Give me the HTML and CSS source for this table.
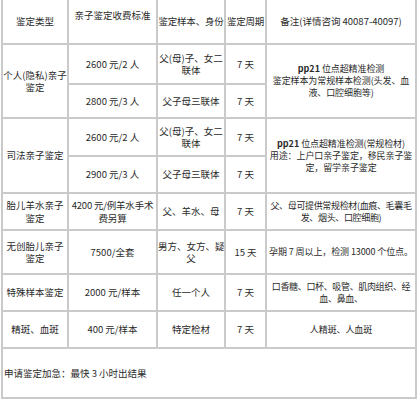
FILE: index.html
```html
<!DOCTYPE html>
<html lang="zh-CN">
<head>
<meta charset="utf-8">
<link rel="stylesheet" href="styles.css">
</head>
<body>
<table class="price">
  <colgroup>
    <col class="c1"><col class="c2"><col class="c3"><col class="c4"><col class="c5">
  </colgroup>
  <tr class="h-head">
    <td>鉴定类型</td>
    <td class="top">亲子鉴定收费标准</td>
    <td class="tight">鉴定样本、身份</td>
    <td class="tight">鉴定周期</td>
    <td>备注(详情咨询 40087-40097)</td>
  </tr>
  <tr class="h-40">
    <td rowspan="2">个人(隐私)亲子<br>鉴定</td>
    <td>2600 元/2 人</td>
    <td>父(母)子、女二<br>联体</td>
    <td>7 天</td>
    <td rowspan="2" class="rm"><b>pp21</b> 位点超精准检测<br>鉴定样本为常规样本检测(头发、血<br>液、口腔细胞等)</td>
  </tr>
  <tr class="h-34">
    <td>2800 元/3 人</td>
    <td>父子母三联体</td>
    <td>7 天</td>
  </tr>
  <tr class="h-38">
    <td rowspan="2">司法亲子鉴定</td>
    <td>2600 元/2 人</td>
    <td>父(母)子、女二<br>联体</td>
    <td>7 天</td>
    <td rowspan="2" class="rm"><b>pp21</b> 位点超精准检测(常规检材)<br>用途：上户口亲子鉴定，移民亲子鉴<br>定，留学亲子鉴定</td>
  </tr>
  <tr class="h-37">
    <td>2900 元/3 人</td>
    <td>父子母三联体</td>
    <td>7 天</td>
  </tr>
  <tr class="h-37">
    <td>胎儿羊水亲子<br>鉴定</td>
    <td class="tight">4200 元/例羊水手术<br>费另算</td>
    <td>父、羊水、母</td>
    <td>7 天</td>
    <td class="rm long">父、母可提供常规检材(血痕、毛囊毛<br>发、烟头、口腔细胞)</td>
  </tr>
  <tr class="h-44">
    <td>无创胎儿亲子<br>鉴定</td>
    <td>7500/全套</td>
    <td>男方、女方、疑<br>父</td>
    <td>15 天</td>
    <td class="rm">孕期 7 周以上，检测 13000 个位点。</td>
  </tr>
  <tr class="h-37">
    <td>特殊样本鉴定</td>
    <td>2000 元/样本</td>
    <td>任一个人</td>
    <td>7 天</td>
    <td class="rm long">口香糖、口杯、吸管、肌肉组织、经<br>血、鼻血、</td>
  </tr>
  <tr class="h-37">
    <td>精斑、血斑</td>
    <td>400 元/样本</td>
    <td>特定检材</td>
    <td>7 天</td>
    <td class="rm">人精斑、人血斑</td>
  </tr>
  <tr class="h-50">
    <td colspan="5" class="note">申请鉴定加急：最快 3 小时出结果</td>
  </tr>
</table>
</body>
</html>
```
FILE: styles.css
```css
html, body {
  margin: 0;
  padding: 0;
  background: #ffffff;
}
body {
  font-family: "Noto Sans CJK SC", sans-serif;
  color: #2a2a2a;
  font-size: 9.5px;
  line-height: 12.5px;
}
.price {
  border-collapse: collapse;
  table-layout: fixed;
  width: 416px;
  margin: -2px 0 0 1px;
}
.c1 { width: 66px; }
.c2 { width: 89px; }
.c3 { width: 68px; }
.c4 { width: 41px; }
.c5 { width: 150px; }
.price td {
  border: 2px solid #cacaca;
  text-align: center;
  vertical-align: middle;
  padding: 0;
  overflow: visible;
  white-space: nowrap;
}
.price td.tight {
  letter-spacing: -0.2px;
}
.price td.rm {
  font-size: 9px;
  letter-spacing: -0.1px;
  line-height: 12px;
}
.price td.long {
  letter-spacing: -0.35px;
}
.price td.top {
  vertical-align: top;
  padding-top: 9px;
}
.price td.note {
  text-align: left;
  padding-left: 1px;
}
.price b {
  font-weight: 700;
  letter-spacing: 0;
}
.h-head { height: 45px; }
.h-40 { height: 40px; }
.h-34 { height: 34px; }
.h-38 { height: 38px; }
.h-37 { height: 37px; }
.h-44 { height: 44px; }
.h-50 { height: 50px; }
```
